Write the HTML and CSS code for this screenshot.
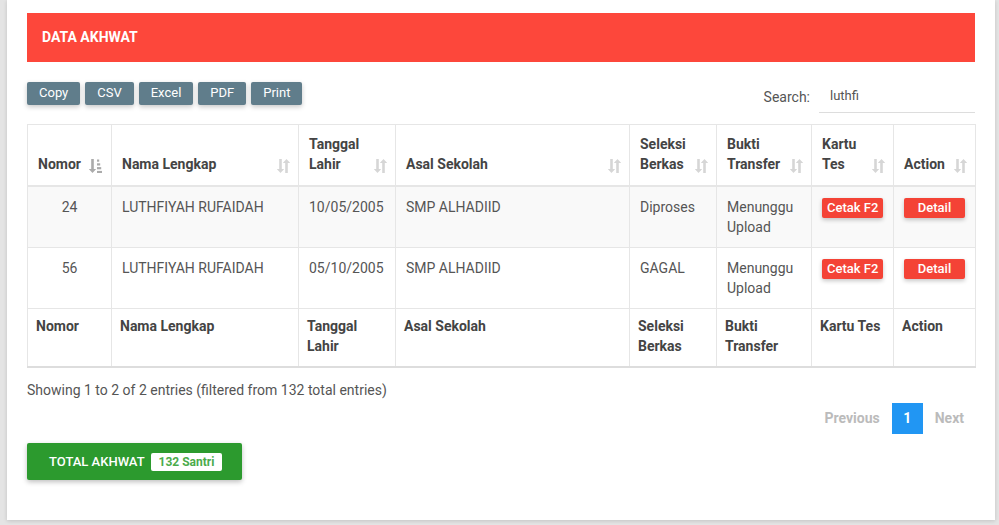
FILE: index.html
```html
<!DOCTYPE html>
<html>
<head>
<meta charset="utf-8">
<link rel="stylesheet" href="styles.css">
</head>
<body>
<div class="card">
  <div class="card-header">DATA AKHWAT</div>
  <div class="toolbar">
    <div class="dt-buttons">
      <button class="dt-btn">Copy</button>
      <button class="dt-btn">CSV</button>
      <button class="dt-btn">Excel</button>
      <button class="dt-btn">PDF</button>
      <button class="dt-btn">Print</button>
    </div>
    <div class="search">
      <span class="search-label">Search:</span>
      <div class="search-input">luthfi</div>
    </div>
  </div>
  <table class="data">
    <colgroup>
      <col style="width:84px"><col style="width:187px"><col style="width:97px"><col style="width:234px">
      <col style="width:87px"><col style="width:95px"><col style="width:82px"><col style="width:82px">
    </colgroup>
    <thead>
      <tr>
        <th>Nomor<svg class="sort active" viewBox="0 0 13 16"><path d="M2.2 1h2.6v10h2.4L3.5 15 -0.2 11h2.4z"/><rect x="8" y="1.5" width="2.2" height="2.2"/><rect x="8" y="5.3" width="3.2" height="2.2"/><rect x="8" y="9.1" width="4.2" height="2.2"/><rect x="8" y="12.9" width="5" height="2.1"/></svg></th>
        <th>Nama Lengkap<svg class="sort" viewBox="0 0 13 16"><path d="M2.2 1h2.6v10h2.4L3.5 15 -0.2 11h2.4z"/><path d="M8.2 15h2.6V5h2.4L9.5 1 5.8 5h2.4z"/></svg></th>
        <th>Tanggal Lahir<svg class="sort" viewBox="0 0 13 16"><path d="M2.2 1h2.6v10h2.4L3.5 15 -0.2 11h2.4z"/><path d="M8.2 15h2.6V5h2.4L9.5 1 5.8 5h2.4z"/></svg></th>
        <th>Asal Sekolah<svg class="sort" viewBox="0 0 13 16"><path d="M2.2 1h2.6v10h2.4L3.5 15 -0.2 11h2.4z"/><path d="M8.2 15h2.6V5h2.4L9.5 1 5.8 5h2.4z"/></svg></th>
        <th>Seleksi Berkas<svg class="sort" viewBox="0 0 13 16"><path d="M2.2 1h2.6v10h2.4L3.5 15 -0.2 11h2.4z"/><path d="M8.2 15h2.6V5h2.4L9.5 1 5.8 5h2.4z"/></svg></th>
        <th>Bukti Transfer<svg class="sort" viewBox="0 0 13 16"><path d="M2.2 1h2.6v10h2.4L3.5 15 -0.2 11h2.4z"/><path d="M8.2 15h2.6V5h2.4L9.5 1 5.8 5h2.4z"/></svg></th>
        <th>Kartu Tes<svg class="sort" viewBox="0 0 13 16"><path d="M2.2 1h2.6v10h2.4L3.5 15 -0.2 11h2.4z"/><path d="M8.2 15h2.6V5h2.4L9.5 1 5.8 5h2.4z"/></svg></th>
        <th>Action<svg class="sort" viewBox="0 0 13 16"><path d="M2.2 1h2.6v10h2.4L3.5 15 -0.2 11h2.4z"/><path d="M8.2 15h2.6V5h2.4L9.5 1 5.8 5h2.4z"/></svg></th>
      </tr>
    </thead>
    <tbody>
      <tr class="odd">
        <td class="num">24</td>
        <td>LUTHFIYAH RUFAIDAH</td>
        <td>10/05/2005</td>
        <td>SMP ALHADIID</td>
        <td>Diproses</td>
        <td>Menunggu Upload</td>
        <td><span class="tbl-btn cetak">Cetak F2</span></td>
        <td><span class="tbl-btn detail">Detail</span></td>
      </tr>
      <tr>
        <td class="num">56</td>
        <td>LUTHFIYAH RUFAIDAH</td>
        <td>05/10/2005</td>
        <td>SMP ALHADIID</td>
        <td>GAGAL</td>
        <td>Menunggu Upload</td>
        <td><span class="tbl-btn cetak">Cetak F2</span></td>
        <td><span class="tbl-btn detail">Detail</span></td>
      </tr>
    </tbody>
    <tfoot>
      <tr>
        <th>Nomor</th>
        <th>Nama Lengkap</th>
        <th>Tanggal Lahir</th>
        <th>Asal Sekolah</th>
        <th>Seleksi Berkas</th>
        <th>Bukti Transfer</th>
        <th>Kartu Tes</th>
        <th>Action</th>
      </tr>
    </tfoot>
  </table>
  <div class="info">Showing 1 to 2 of 2 entries (filtered from 132 total entries)</div>
  <div class="paging">
    <span class="pg disabled">Previous</span>
    <span class="pg current">1</span>
    <span class="pg disabled">Next</span>
  </div>
  <div class="total-row">
    <button class="total-btn">TOTAL AKHWAT <span class="badge">132 Santri</span></button>
  </div>
</div>
</body>
</html>
```

FILE: styles.css
```css
* { box-sizing: border-box; }
html, body { margin: 0; padding: 0; }
body {
  background: #e4e4e4;
  font-family: Roboto, "Liberation Sans", Arial, sans-serif;
  color: #555;
  min-height: 525px;
}
.card {
  margin-left: 7px;
  width: 988px;
  background: #fff;
  padding: 13px 20px 40px 20px;
  box-shadow: 0 1px 4px rgba(0,0,0,0.15);
}
.card-header {
  height: 49px;
  background: #fd473b;
  color: #fff;
  font-weight: 700;
  font-size: 14px;
  line-height: 49px;
  padding-left: 15px;
}
.toolbar {
  display: flex;
  justify-content: space-between;
  align-items: flex-start;
  margin-top: 20px;
}
.dt-buttons {
  display: flex;
  gap: 5px;
  margin-top: 0;
}
.dt-btn {
  font-family: Roboto, "Liberation Sans", Arial, sans-serif;
  font-size: 13px;
  font-weight: 400;
  color: #fff;
  background: #607d8b;
  border: 0;
  border-radius: 2px;
  height: 23px;
  padding: 0 12px 3px 12px;
  line-height: 17px;
  box-shadow: 0 2px 5px rgba(0,0,0,0.22);
}
.search {
  display: flex;
  align-items: center;
  height: 31px;
}
.search-label {
  font-size: 14px;
  color: #555;
  margin-right: 9px;
  margin-bottom: 1px;
}
.search-input {
  width: 156px;
  height: 31px;
  border-bottom: 1px solid #ddd;
  font-size: 13px;
  color: #555;
  padding: 6px 0 0 11px;
}
.data {
  margin-top: 11px;
  width: 948px;
  table-layout: fixed;
  border-collapse: collapse;
  font-size: 14px;
  line-height: 20px;
}
.data th, .data td {
  border: 1px solid #e6e6e6;
  text-align: left;
}
.data thead th {
  position: relative;
  vertical-align: bottom;
  padding: 9px 26px 11px 10px;
  color: #444;
  font-weight: 700;
  border-bottom: 2px solid #e6e6e6;
}
.data td {
  vertical-align: top;
  padding: 10px 10px;
  color: #555;
}
.data td.num { text-align: center; }
.data tr.odd td { background: #f9f9f9; }
.data tfoot th {
  vertical-align: top;
  padding: 7px 8px 10px 8px;
  color: #444;
  font-weight: 700;
  border-top: 1px solid #ddd;
  border-bottom: 2px solid #ddd;
}
.sort {
  position: absolute;
  right: 8px;
  bottom: 11px;
  width: 13px;
  height: 16px;
  fill: #d6d6d6;
}
.sort.active { fill: #ababab; right: 9px; }
.tbl-btn {
  display: inline-block;
  height: 20px;
  line-height: 20px;
  font-size: 13px;
  font-weight: 500;
  color: #fff;
  background: #f44336;
  border-radius: 2px;
  white-space: nowrap;
  box-shadow: 0 2px 4px rgba(0,0,0,0.22);
}
.cetak { padding: 0 5px; }
.detail { width: 61px; text-align: center; }
.info {
  margin-top: 12px;
  font-size: 14px;
  line-height: 20px;
  color: #555;
}
.paging {
  display: flex;
  justify-content: flex-end;
  align-items: center;
  margin-top: 3px;
}
.pg {
  font-size: 14px;
  font-weight: 700;
  height: 31px;
  line-height: 31px;
}
.pg.disabled { color: #bbb; }
.pg.disabled:first-child { margin-right: 12px; }
.pg.disabled:last-child { margin-left: 12px; margin-right: 11px; }
.pg.current {
  width: 31px;
  text-align: center;
  background: #2196f3;
  color: #fff;
}
.total-row { margin-top: 9px; }
.total-btn {
  font-family: Roboto, "Liberation Sans", Arial, sans-serif;
  height: 37px;
  width: 215px;
  background: #2c9a2e;
  color: #fff;
  border: 0;
  border-radius: 2px;
  font-size: 13px;
  font-weight: 500;
  text-align: left;
  padding: 0 0 0 22px;
  box-shadow: 0 2px 5px rgba(0,0,0,0.25);
}
.badge {
  display: inline-block;
  background: #fff;
  font-size: 12px;
  font-weight: 700;
  padding: 0 8px;
  height: 18px;
  line-height: 18px;
  margin-left: 3px;
  border-radius: 2px;
  color: #4aab4b;
}
```
